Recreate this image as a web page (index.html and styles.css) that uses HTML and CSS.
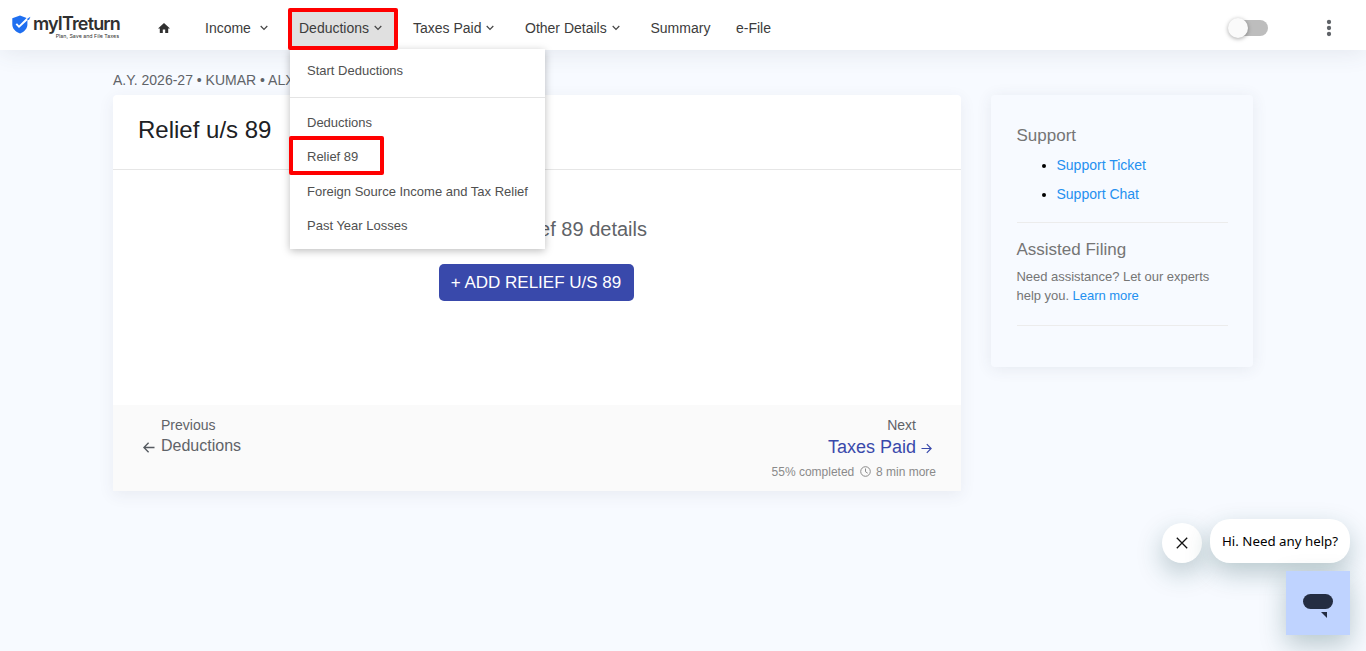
FILE: index.html
```html
<!DOCTYPE html>
<html lang="en">
<head>
<meta charset="utf-8">
<title>Relief u/s 89</title>
<link rel="stylesheet" href="styles.css">
</head>
<body>
<header class="topbar">
  <a class="logo">
    <svg class="shield" width="20" height="20" viewBox="0 0 20 20"><path d="M8 .6 14.600 3 7 10.400 5 8.200 3.600 9.600 7 13l8.400-7.800v4.200c0 4-3 7.200-7.300 9.100C3.400 16.600.3 13.400.3 9.400V3.200z" fill="#1f6ff0"/><path d="M15.300 3.800 18.400 1.800l-1.100 2.700-2 .9z" fill="#1f6ff0"/></svg>
    <span class="wordmark"><span class="brand">myITreturn</span><span class="tagline">Plan, Save and File Taxes</span></span>
  </a>
  <nav class="nav">
    <a class="home"><svg width="12" height="10" viewBox="0 0 12 10"><path d="M6 0 0 5.400h1.800V10h3V6.600h2.400V10h3V5.400H12z" fill="#303030"/></svg></a>
    <a class="income">Income <svg class="caret" viewBox="0 0 8 6"><path d="M.7 1 4 4.300 7.300 1"/></svg></a>
    <div class="drop">
      <a class="trigger">Deductions <svg class="caret" viewBox="0 0 8 6"><path d="M.7 1 4 4.300 7.300 1"/></svg></a>
      <div class="menu">
        <a class="start">Start Deductions</a>
        <a>Deductions</a>
        <a class="marked">Relief 89</a>
        <a>Foreign Source Income and Tax Relief</a>
        <a>Past Year Losses</a>
      </div>
    </div>
    <a class="taxes">Taxes Paid <svg class="caret" viewBox="0 0 8 6"><path d="M.7 1 4 4.300 7.300 1"/></svg></a>
    <a class="other">Other Details <svg class="caret" viewBox="0 0 8 6"><path d="M.7 1 4 4.300 7.300 1"/></svg></a>
    <a class="summary">Summary</a>
    <a class="efile">e-File</a>
  </nav>
  <div class="toggle"><span class="knob"></span></div>
  <svg class="more" width="6" height="18" viewBox="0 0 6 18"><g fill="#5f6368"><circle cx="3" cy="3" r="2.150"/><circle cx="3" cy="9" r="2.150"/><circle cx="3" cy="15" r="2.150"/></g></svg>
</header>
<main class="layout">
  <section class="content">
    <div class="crumb">A.Y. 2026-27 • KUMAR • ALX</div>
    <div class="card">
      <h1>Relief u/s 89</h1>
      <div class="body">
        <p>Add your Relief 89 details</p>
        <button>+ ADD RELIEF U/S 89</button>
      </div>
      <footer>
        <div class="prev">
          <svg width="12" height="11" viewBox="0 0 12 11"><path d="M11.500 5.500H1M5.600.8.9 5.500l4.700 4.700" fill="none" stroke="#555a60" stroke-width="1.400"/></svg>
          <div><div class="hint">Previous</div><div class="target">Deductions</div></div>
        </div>
        <div class="next">
          <div class="hint">Next</div>
          <div class="target">Taxes Paid <svg width="11" height="11" viewBox="0 0 11 11"><path d="M.5 5.500h9.300M5.800 1.200l4.300 4.300-4.300 4.300" fill="none" stroke="#3949ab" stroke-width="1.200"/></svg></div>
          <div class="progress">55% completed <svg width="11" height="11" viewBox="0 0 11 11"><path d="M5.500 2.500v3.200l2.200 1.500" fill="none" stroke="#8a8a8a"/><circle cx="5.500" cy="5.500" r="4.800" fill="none" stroke="#8a8a8a"/></svg> 8 min more</div>
        </div>
      </footer>
    </div>
  </section>
  <aside class="side">
    <h2>Support</h2>
    <ul><li><a>Support Ticket</a></li><li><a>Support Chat</a></li></ul>
    <hr>
    <h2>Assisted Filing</h2>
    <p>Need assistance? Let our experts<br>help you. <a>Learn more</a></p>
    <hr>
  </aside>
</main>
<div class="chat">
  <div class="chat-row">
    <div class="close"><svg width="12" height="12" viewBox="0 0 12 12"><path d="M.8.8l10.400 10.400M11.200.8.8 11.200" stroke="#111" stroke-width="1.300"/></svg></div>
    <div class="bubble">Hi. Need any help?</div>
  </div>
  <div class="launcher"><svg width="64" height="64" viewBox="0 0 64 64"><rect x="17" y="23" width="30" height="15" rx="7.500" fill="#242d42"/><path d="M35 41h6v6z" fill="#242d42"/></svg></div>
</div>
</body>
</html>
```
FILE: styles.css
```css
* { box-sizing: border-box; }
body {
  margin: 0;
  height: 651px;
  overflow: hidden;
  background: #f7faff;
  font-family: "Liberation Sans", Arial, sans-serif;
  font-size: 14px;
  color: #5f6368;
}
.topbar {
  position: relative;
  z-index: 2;
  display: flex;
  align-items: center;
  height: 50px;
  padding: 6px 34px 0 12px;
  background: #fff;
  box-shadow: 0 2px 24px rgba(60, 70, 90, .11);
}
.logo { display: flex; width: 146px; height: 26px; color: #303030; }
.shield { flex: none; }
.wordmark { display: flex; flex-direction: column; width: 87px; }
.brand { font: 600 18px/18px Inter, sans-serif; letter-spacing: -.86px; padding-left: 1px; white-space: nowrap; }
.tagline { font: 5.300px/6px Inter, sans-serif; text-align: right; white-space: nowrap; }
.nav { display: flex; align-items: center; flex: 1; color: #3c3c3c; white-space: nowrap; }
.home { display: flex; width: 47px; }
.income { width: 86px; }
.income .caret { margin-left: 5px; }
.caret { width: 8px; height: 6px; margin-bottom: 2px; fill: none; stroke: #444; stroke-width: 1.200; }
.drop { position: relative; width: 125px; margin-left: -3px; }
.trigger {
  display: flex;
  align-items: center;
  gap: 5px;
  width: 110px;
  height: 42px;
  margin: -2px 0 -4px;
  padding: 0 0 2px 7px;
  border: 4px solid #f00;
  border-radius: 2px;
  background: #e0e0e0;
}
.trigger .caret { margin-bottom: 0; }
.menu {
  position: absolute;
  z-index: -1;
  top: 39px;
  left: 2px;
  width: 255px;
  height: 200px;
  padding-top: 5px;
  background: #fff;
  box-shadow: 0 2px 8px rgba(0, 0, 0, .26);
  font-size: 13px;
}
.menu a { display: flex; align-items: center; height: 34.300px; padding-left: 17px; color: #505050; }
.menu .start { height: 44px; padding-bottom: 10px; margin-bottom: 7px; border-bottom: 1px solid #e4e4e4; }
.menu .marked { width: 95px; height: 39px; margin: -3px 0 -1px -1px; padding: 2px 0 0 14px; border: 4px solid #f00; border-radius: 2px; }
.taxes { width: 112px; }
.taxes .caret, .other .caret { margin-left: 1px; }
.other { width: 125.500px; }
.summary { width: 85.500px; }
.toggle { width: 37px; height: 16px; margin-right: 58px; border-radius: 8px; background: #bdbdbd; }
.knob { display: block; width: 20px; height: 20px; margin: -2px 0 0 -3px; border-radius: 50%; background: #fafafa; box-shadow: 0 1px 4px rgba(0, 0, 0, .35); }
.layout { display: flex; align-items: flex-start; gap: 30px; padding: 21px 113px 0; }
.content { width: 848px; }
.crumb { height: 24px; line-height: 18px; }
.card { border-radius: 4px 4px 0 0; background: #fff; box-shadow: 0 4px 16px rgba(60, 70, 90, .08); }
h1 { height: 75px; margin: 0; padding: 21px 25px 0; border-bottom: 1px solid #e6e6e6; font-size: 24px; line-height: 28px; font-weight: 400; color: #202124; }
.body { height: 235px; padding: 47px 2px 0 0; text-align: center; }
.body p { margin: 0 0 23px; padding-right: 6px; font-size: 20px; line-height: 24px; }
button { width: 195px; height: 37px; padding: 0; border: 0; border-radius: 5px; background: #3949ab; color: #fff; font: 17px "Liberation Sans", Arial, sans-serif; }
footer { display: flex; justify-content: space-between; height: 86px; padding: 12px 25px 0 30px; background: #fafafa; }
.prev { display: flex; gap: 6px; }
.prev svg { margin-top: 25px; }
.hint { line-height: 16px; }
.prev .target { margin-top: 3px; font-size: 16px; line-height: 20px; }
.next { text-align: right; }
.next .hint { padding-right: 20px; }
.next .target { padding-right: 4px; margin-top: 3px; font-size: 18px; line-height: 22px; color: #3949ab; }
.next .target svg { margin-bottom: -1px; }
.progress { margin-top: 6px; font-size: 12px; line-height: 16px; color: #8a8a8a; }
.progress svg { margin: 0 2px -1px; }
.side { width: 262px; height: 272px; margin-top: 24px; padding: 31px 25px 0 25.500px; border-radius: 4px; box-shadow: 0 2px 16px rgba(60, 70, 90, .09); color: #757575; }
h2 { margin: 0; font-size: 17px; line-height: 20px; font-weight: 400; }
ul { margin: 5px 0 13px; padding-left: 40px; color: #000; }
li { line-height: 29px; }
.side a { color: #2490f0; }
hr { height: 1px; margin: 0 0 17px; border: 0; background: #ececec; }
.side p { margin: 7px 0 20px; font-size: 13px; line-height: 19px; letter-spacing: -.03px; white-space: nowrap; }
.chat { position: absolute; right: 16px; bottom: 16px; display: flex; flex-direction: column; align-items: flex-end; gap: 8px; }
.chat-row { display: flex; align-items: flex-end; gap: 8px; }
.close { display: flex; align-items: center; justify-content: center; width: 40px; height: 40px; border-radius: 50%; background: #fff; box-shadow: 0 10px 26px rgba(23, 73, 77, .28); }
.bubble { width: 140px; height: 44px; border-radius: 20px; background: #fff; box-shadow: 0 10px 26px rgba(23, 73, 77, .28); color: #000; font: 13.300px/44px "Noto Sans", sans-serif; text-align: center; white-space: nowrap; }
.launcher { width: 64px; height: 64px; background: #bfd3ff; box-shadow: 0 10px 26px rgba(23, 73, 77, .28); }
```
